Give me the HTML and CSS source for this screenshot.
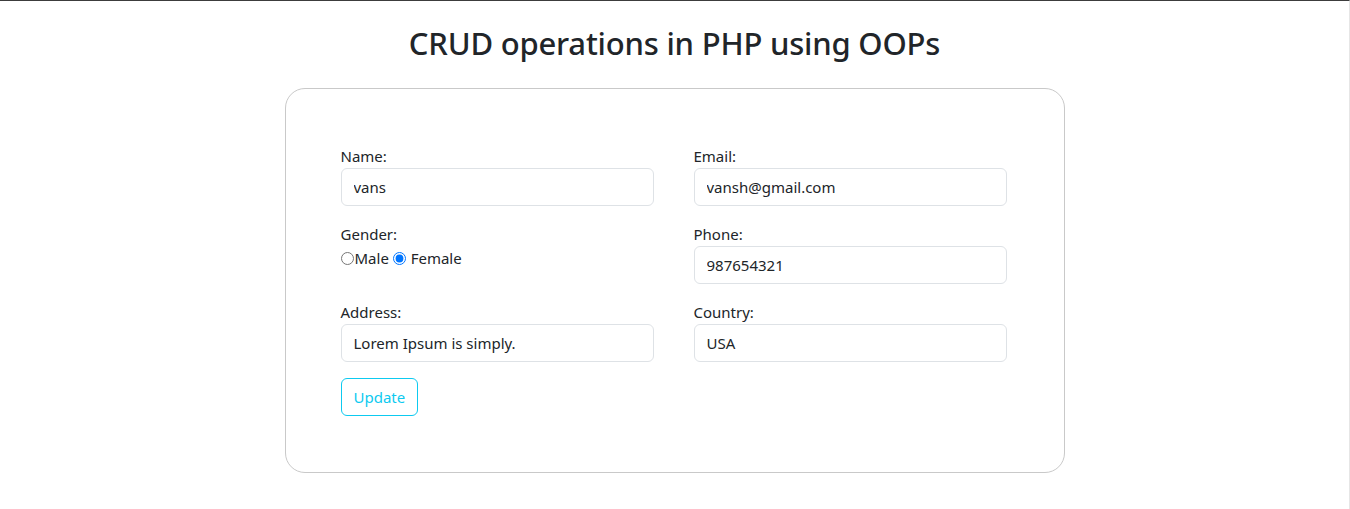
FILE: index.html
```html
<!DOCTYPE html>
<html lang="en">
<head>
<meta charset="utf-8">
<title>CRUD operations in PHP using OOPs</title>
<link rel="stylesheet" href="styles.css">
</head>
<body>
<main class="page">
  <h2 class="title">CRUD operations in PHP using OOPs</h2>
  <form class="card">
    <div class="grid">
      <div class="field">
        <label class="label" for="name">Name:</label>
        <input class="input" id="name" type="text" value="vans">
      </div>
      <div class="field">
        <label class="label" for="email">Email:</label>
        <input class="input" id="email" type="email" value="vansh@gmail.com">
      </div>
      <div class="field">
        <span class="label">Gender:</span>
        <div class="radios"><input class="radio" type="radio" name="gender" value="male">Male <input class="radio" type="radio" name="gender" value="female" checked> Female</div>
      </div>
      <div class="field">
        <label class="label" for="phone">Phone:</label>
        <input class="input" id="phone" type="text" value="987654321">
      </div>
      <div class="field">
        <label class="label" for="address">Address:</label>
        <input class="input" id="address" type="text" value="Lorem Ipsum is simply.">
      </div>
      <div class="field">
        <label class="label" for="country">Country:</label>
        <input class="input" id="country" type="text" value="USA">
      </div>
    </div>
    <div class="actions">
      <button class="btn" type="button">Update</button>
    </div>
  </form>
</main>
</body>
</html>
```

FILE: styles.css
```css
* { box-sizing: border-box; }
html, body { margin: 0; padding: 0; }
body {
  font-family: "Noto Sans", "Open Sans", sans-serif;
  font-size: 15px;
  line-height: 24px;
  color: #212529;
  background: #fff;
  border-top: 1px solid #3c3c3c;
  border-right: 1px solid #e6e6e6;
  min-height: 509px;
}
.page {
  display: flex;
  flex-direction: column;
  align-items: center;
}
.title {
  margin: 23px 0 25px;
  font-size: 31px;
  line-height: 39px;
  font-weight: 500;
  letter-spacing: -0.2px;
}
.card {
  width: 780px;
  border: 1px solid #c9c9c9;
  border-radius: 20px;
  padding: 55px 55px 56px;
}
.grid {
  display: grid;
  grid-template-columns: 313px 313px;
  column-gap: 40px;
  row-gap: 16px;
}
.field { display: flex; flex-direction: column; }
.label { display: block; height: 24px; }
.input {
  height: 38px;
  width: 100%;
  padding: 6px 12px;
  font: inherit;
  color: #212529;
  border: 1px solid #dee2e6;
  border-radius: 6px;
  background: #fff;
}
.radios { height: 24px; display: flex; align-items: center; white-space: pre; }
.radio { margin: 0 1px 0 0; width: 13px; height: 13px; }
.actions { margin-top: 16px; }
.btn {
  height: 38px;
  padding: 6px 12px;
  font: inherit;
  color: #0dcaf0;
  background: #fff;
  border: 1px solid #0dcaf0;
  border-radius: 6px;
}
```
